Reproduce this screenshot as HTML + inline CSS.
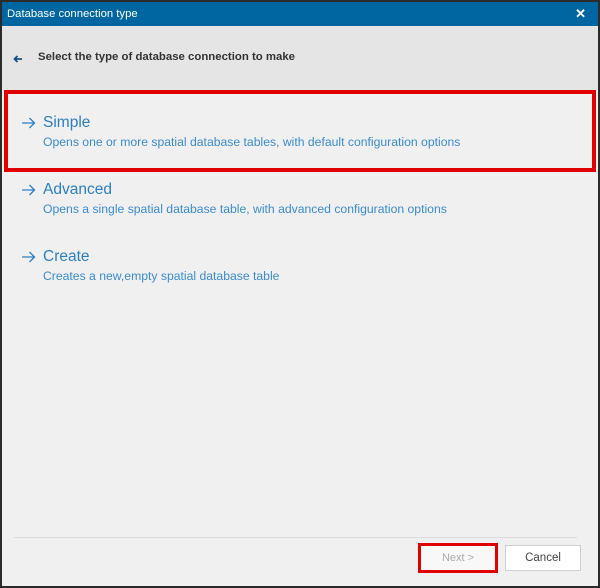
<!DOCTYPE html>
<html><head><style>
html,body{margin:0;padding:0;}
body{width:600px;height:588px;background:#2b2b2b;position:relative;overflow:hidden;font-family:"Liberation Sans",sans-serif;}
.win{position:absolute;left:2px;top:2px;width:596px;height:584px;background:#f0f0f0;}
.title{position:absolute;left:0;top:0;width:596px;height:24px;background:#0066a1;color:#fff;font-size:11.3px;line-height:24px;}
.title span{position:absolute;left:5px;}
.title b{position:absolute;right:12px;top:0;font-size:13px;}
.head{position:absolute;left:0;top:24px;width:596px;height:64px;background:#e5e5e5;}
.head svg{position:absolute;left:11px;top:29px;}
.head .t{position:absolute;left:36px;top:25px;font-size:11.4px;font-weight:bold;color:#333;}
.red{position:absolute;left:2px;top:88px;width:584px;height:74px;border:4px solid #e00000;}
.item{position:absolute;left:18px;color:#2a7fc4;}
.item .h{font-size:15.5px;line-height:18px;position:relative;padding-left:23px;}
.item .h svg{position:absolute;left:1px;top:3px;}
.item .d{font-size:12.2px;margin-left:23px;margin-top:3px;color:#3a8bd0;}
.sep{position:absolute;left:12px;top:535px;width:563px;height:1px;background:#dcdcdc;}
.next{position:absolute;left:416px;top:541px;width:74px;height:24px;border:3px solid #e00000;background:#f8f8f8;color:#aaa;font-size:11px;text-align:center;line-height:24px;}
.cancel{position:absolute;left:503px;top:543px;width:74px;height:24px;border:1px solid #cfcfcf;background:#fff;color:#444;font-size:11.5px;text-align:center;line-height:24px;}
</style></head><body>
<div class="win">
<div class="title"><span>Database connection type</span><b>✕</b></div>
<div class="head"><svg width="10" height="8" viewBox="0 0 10 8"><path d="M9 4H1.5M4.5 1L1.5 4L4.5 7" fill="none" stroke="#1a4f86" stroke-width="1.8"/></svg><span class="t">Select the type of database connection to make</span></div>
<div class="red"></div>
<div class="item" style="top:112px"><div class="h"><svg width="15" height="12" viewBox="0 0 15 12"><path d="M1 6H13.5M8.5 1L13.5 6L8.5 11" fill="none" stroke="#2a7fc4" stroke-width="1.3"/></svg>Simple</div><div class="d">Opens one or more spatial database tables, with default configuration options</div></div>
<div class="item" style="top:179px"><div class="h"><svg width="15" height="12" viewBox="0 0 15 12"><path d="M1 6H13.5M8.5 1L13.5 6L8.5 11" fill="none" stroke="#2a7fc4" stroke-width="1.3"/></svg>Advanced</div><div class="d">Opens a single spatial database table, with advanced configuration options</div></div>
<div class="item" style="top:246px"><div class="h"><svg width="15" height="12" viewBox="0 0 15 12"><path d="M1 6H13.5M8.5 1L13.5 6L8.5 11" fill="none" stroke="#2a7fc4" stroke-width="1.3"/></svg>Create</div><div class="d">Creates a new,empty spatial database table</div></div>
<div class="sep"></div>
<div class="next">Next &gt;</div>
<div class="cancel">Cancel</div>
</div>
</body></html>
